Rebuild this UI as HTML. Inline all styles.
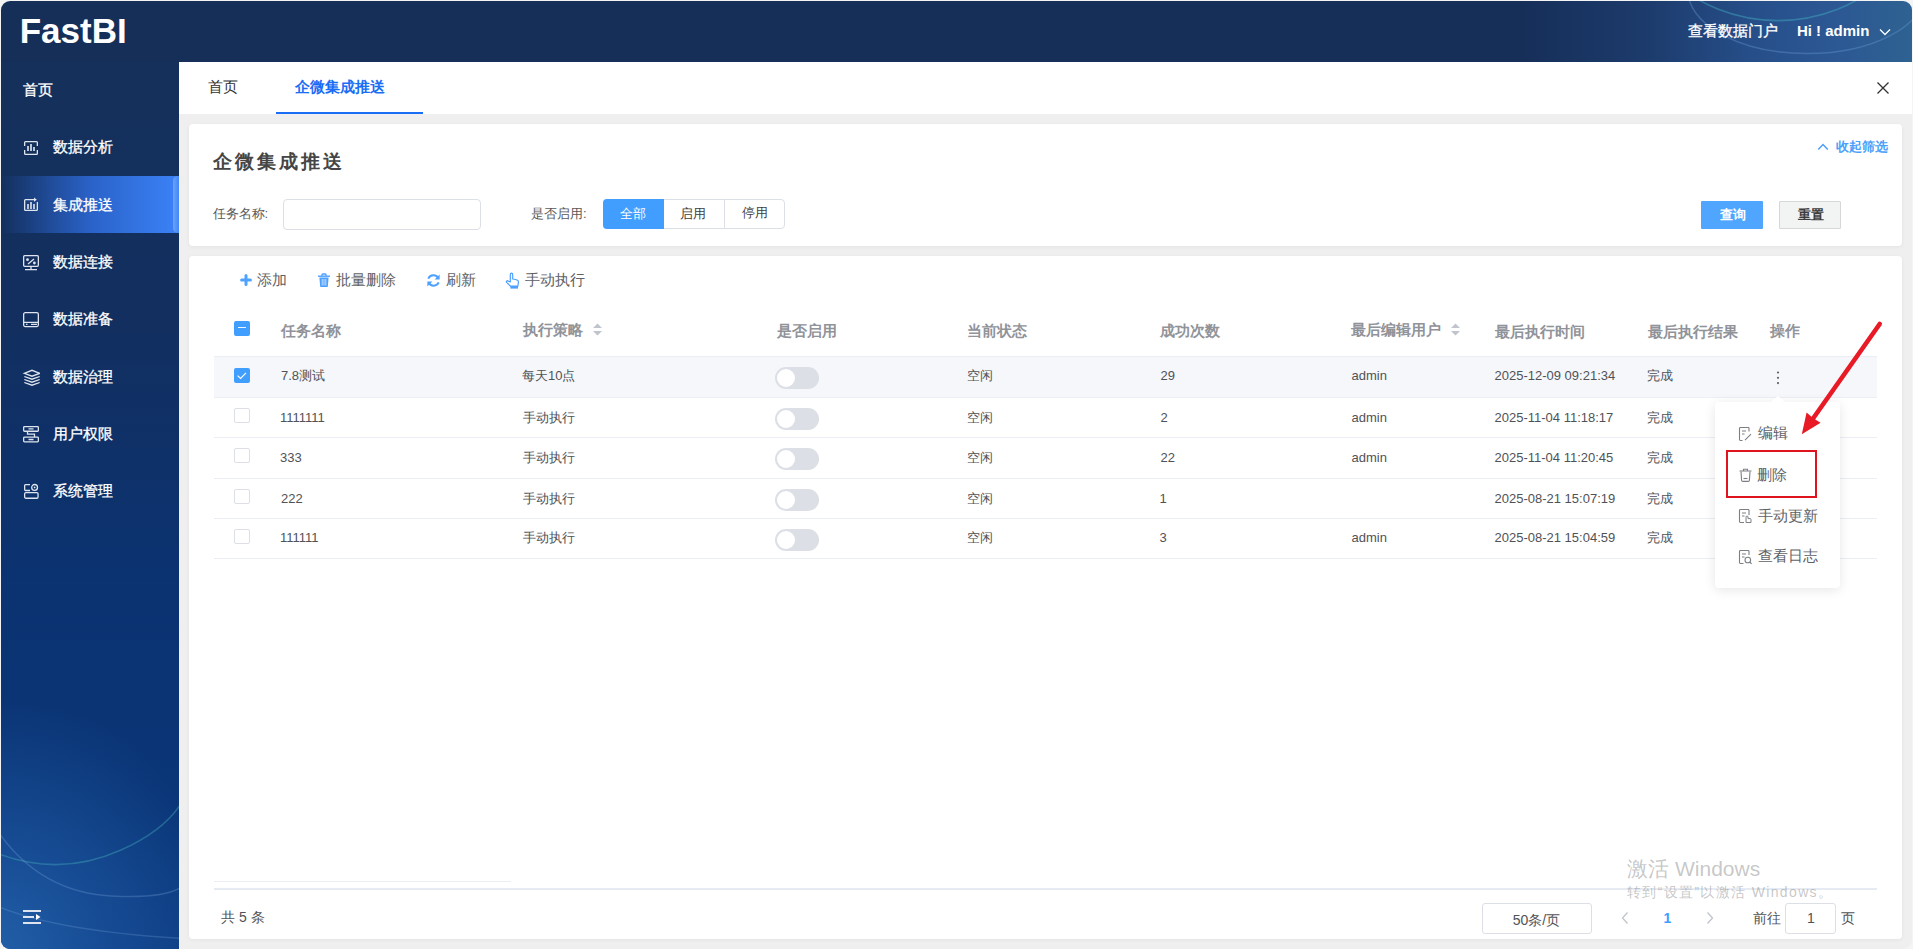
<!DOCTYPE html>
<html><head><meta charset="utf-8">
<style>
*{margin:0;padding:0;box-sizing:border-box}
html,body{width:1913px;height:949px;overflow:hidden;background:#f4f4f4;font-family:"Liberation Sans",sans-serif}
.a{position:absolute;white-space:nowrap}
#frame{position:absolute;left:1px;top:1px;width:1911px;height:948px;border-radius:9px;overflow:hidden;background:#efefef}
#hdr{position:absolute;left:0;top:0;width:1911px;height:61px;background:linear-gradient(90deg,#162f59 0,#162f59 1520px,#1c3a6b 1640px,#27508b 1760px,#2c5893 1840px,#2e6291 1911px);overflow:hidden}
#side{position:absolute;left:0;top:61px;width:178px;height:887px;background:radial-gradient(ellipse 230px 250px at 0% 100%,rgba(33,94,166,1) 0,rgba(28,86,160,.7) 40%,rgba(14,56,125,0) 100%),linear-gradient(180deg,#15305a 0,#122f60 30%,#0b3372 60%,#0a3577 85%,#0c3a80 100%);overflow:hidden}
.menu{position:absolute;left:0;width:178px;height:57px;color:#fff;font-size:15px;font-weight:500}
.menu span{position:absolute;left:52px;top:18px;line-height:20px}
.menu svg{position:absolute}
.ic{fill:none;stroke:#dfe5ee;stroke-width:1.3}
#tabs{position:absolute;left:178px;top:61px;width:1733px;height:52px;background:#fff}
.card{position:absolute;background:#fff;border-radius:4px;box-shadow:0 1px 4px rgba(0,0,0,.05)}
.lbl{color:#606266;font-size:13px;line-height:16px}
.th{color:#909399;font-size:15px;font-weight:bold;line-height:18px}
.td{color:#606266;font-size:13px;line-height:16px}
.cb{position:absolute;left:45px;width:15px;height:15px;border:1px solid #dcdfe6;border-radius:2px;background:#fff}
.sw{position:absolute;left:586px;width:44px;height:21px;border-radius:11px;background:#dcdfe6}
.sw:after{content:"";position:absolute;left:2px;top:2px;width:17px;height:17px;border-radius:50%;background:#fff}
.rl{position:absolute;left:25px;width:1663px;height:1px;background:#ebeef5}
.dd{color:#606266;font-size:15px;line-height:18px}
</style></head><body>
<div id="frame">
  <div id="hdr">
    <svg class="a" style="left:0;top:0" width="1911" height="61">
      <circle cx="1777" cy="-142.4" r="162" fill="none" stroke="rgba(70,180,200,.42)" stroke-width="1.6"/>
      <ellipse cx="1806" cy="-10.4" rx="119" ry="63" fill="none" stroke="rgba(110,160,220,.35)" stroke-width="1.5"/>
    </svg>
                <svg class="a" style="left:1878px;top:27px" width="12" height="8" viewBox="0 0 12 8"><path d="M1 1.5 L6 6.5 L11 1.5" fill="none" stroke="#fff" stroke-width="1.3"/></svg>
  </div>
  <div id="side">
    <svg class="a" style="left:0;top:0" width="178" height="886">
      <path d="M-2 792 Q 60 815 120 788 T 190 718" fill="none" stroke="rgba(70,180,190,.38)" stroke-width="1.6"/>
      <path d="M-2 771 Q 40 830 110 834 T 190 815" fill="none" stroke="rgba(140,180,230,.25)" stroke-width="1.5"/>
      <path d="M-2 845 Q 60 870 190 877" fill="none" stroke="rgba(140,180,230,.22)" stroke-width="1.5"/>
    </svg>
    <div class="menu" style="top:0"></div>
    <div class="menu" style="top:57px"><svg style="left:22px;top:21px" width="16" height="16">
      <path class="ic" d="M1.65 6 V2.5 Q1.65 1.65 2.5 1.65 H13.5 Q14.35 1.65 14.35 2.5 V6 M1.65 10 V13.5 Q1.65 14.35 2.5 14.35 H13.5 Q14.35 14.35 14.35 13.5 V10"/>
      <rect x="4" y="6" width="2" height="5" fill="#b9c4d4"/><rect x="7" y="4" width="2" height="7" fill="#b9c4d4"/><rect x="10" y="7" width="2" height="4" fill="#b9c4d4"/>
    </svg></div>
    <div class="menu" style="top:114px;background:linear-gradient(90deg,rgba(30,80,170,0) 0,#2a62c8 50%,#3b82f8 100%)"><div class="a" style="left:172px;top:0;width:6px;height:57px;background:linear-gradient(90deg,rgba(150,190,255,.55),rgba(120,170,255,.1));border-radius:5px 0 0 5px"></div><svg style="left:22px;top:20px" width="16" height="16">
      <path class="ic" d="M1.65 14 V4.5 Q1.65 3.65 2.5 3.65 H11.5 M14.35 6 V13.5 Q14.35 14.35 13.5 14.35 H2.5 Q1.65 14.35 1.65 13.5"/>
      <path d="M11 1.6 L13.8 3.65 L11 5.7 Z" fill="#dfe5ee"/>
      <rect x="4" y="8" width="2" height="5" fill="#b9c4d4"/><rect x="7" y="6" width="2" height="7" fill="#b9c4d4"/><rect x="10" y="8" width="2" height="5" fill="#b9c4d4"/>
    </svg></div>
    <div class="menu" style="top:171px"><svg style="left:21px;top:21px" width="18" height="17">
      <rect class="ic" x="1.65" y="1.65" width="14.7" height="10.7" rx="1"/>
      <path class="ic" d="M9 12.5 V15.2 M3 15.6 H15 M6 10 L12 5"/>
      <circle cx="5.5" cy="5.7" r="1.4" fill="#dfe5ee"/><circle cx="12.4" cy="9" r="1.4" fill="#dfe5ee"/>
    </svg></div>
    <div class="menu" style="top:228px"><svg style="left:21px;top:21px" width="18" height="17">
      <rect class="ic" x="1.65" y="1.65" width="14.7" height="13.9" rx="1.5"/>
      <path class="ic" d="M1.65 11.3 H16.35 M4 13.4 H5.5 M9 13.4 H15"/>
    </svg></div>
    <div class="menu" style="top:285px"><svg style="left:21px;top:22px" width="18" height="18">
      <path class="ic" d="M2.3 4.3 L10 1.3 L17.7 4.3 L10 7.2 Z M2.3 7.5 L10 10.2 L17.7 7.5 M2.3 10.5 L10 13.2 L17.7 10.5 M2.3 13.5 L10 16.2 L17.7 13.5"/>
    </svg></div>
    <div class="menu" style="top:342px"><svg style="left:21px;top:21px" width="18" height="18">
      <rect class="ic" x="1.65" y="1.65" width="14.7" height="4.6" rx="0.8"/>
      <rect class="ic" x="1.65" y="12.2" width="14.7" height="4.6" rx="0.8"/>
      <path class="ic" d="M6.5 3.9 H11.5 M6.5 14.5 H11.5 M5.5 6.5 V9.2 H12.5 V12"/>
    </svg></div>
    <div class="menu" style="top:399px"><svg style="left:21px;top:21px" width="18" height="18">
      <path class="ic" d="M8 2.65 H3.5 Q2.65 2.65 2.65 3.5 V7.6 Q2.65 8.5 3.5 8.5 H8"/>
      <circle class="ic" cx="12.6" cy="5.4" r="2.9"/><circle cx="12.6" cy="5.4" r="0.9" fill="#dfe5ee"/>
      <rect class="ic" x="2.65" y="10.65" width="13.4" height="5.6" rx="1.2"/>
    </svg></div>
    <svg class="a" style="left:21px;top:847px" width="20" height="16">
      <rect x="1" y="1" width="18" height="2" fill="#dde4f0"/><rect x="1" y="7" width="11" height="2" fill="#dde4f0"/><rect x="1" y="13" width="18" height="2" fill="#dde4f0"/>
      <path d="M14 5 L18.5 8 L14 11 Z" fill="#fff"/>
    </svg>
  </div>
  <div id="tabs">
            <div class="a" style="left:97px;top:50px;width:147px;height:2px;background:#1a6ef5"></div>
    <svg class="a" style="left:1697px;top:19px" width="14" height="14"><path d="M1.5 1.5 L12.5 12.5 M12.5 1.5 L1.5 12.5" stroke="#303133" stroke-width="1.3"/></svg>
  </div>
</div>
<div class="card" style="left:189px;top:124px;width:1713px;height:122px"></div>
<div class="card" style="left:189px;top:256px;width:1713px;height:683px"></div>
<svg class="a" style="left:1817px;top:142px" width="12" height="9"><path d="M1.2 7.5 L6 2.5 L10.8 7.5" fill="none" stroke="#4c9ffa" stroke-width="1.5"/></svg>
<div class="a" style="left:283px;top:199px;width:198px;height:31px;border:1px solid #dcdfe6;border-radius:4px;background:#fff"></div>
<div class="a" style="left:603px;top:199px;width:182px;height:30px;border:1px solid #dcdfe6;border-radius:4px;background:#fff"></div>
<div class="a" style="left:603px;top:199px;width:61px;height:30px;border-radius:4px 0 0 4px;background:#419eff"></div>
<div class="a" style="left:724px;top:200px;width:1px;height:28px;background:#dcdfe6"></div>
<div class="a" style="left:1701px;top:201px;width:62px;height:28px;background:#50a6ff;border-radius:1px"></div>
<div class="a" style="left:1779px;top:201px;width:62px;height:28px;background:#f2f3f3;border:1px solid #d6d7d7;border-radius:1px"></div>
<svg class="a" style="left:239px;top:273px" width="14" height="14"><path d="M7 2.6 V11.4 M2.6 7 H11.4" stroke="#4fa2ff" stroke-width="3" stroke-linecap="round"/></svg>
<svg class="a" style="left:317px;top:273px" width="14" height="15">
<path d="M1 3.2 H13" stroke="#4ca0ff" stroke-width="1.4"/><path d="M5 3 V1.8 Q5 1 5.8 1 H8.2 Q9 1 9 1.8 V3" fill="none" stroke="#4ca0ff" stroke-width="1.3"/>
<path d="M2.4 4.5 H11.6 L10.8 13.4 Q10.7 14 10 14 H4 Q3.3 14 3.2 13.4 Z" fill="#4ca0ff"/>
<path d="M5.2 6 V12.5 M7 6 V12.5 M8.8 6 V12.5" stroke="#cfe3ff" stroke-width="0.9"/></svg>
<svg class="a" style="left:426px;top:273px" width="15" height="15">
<path d="M12.3 5.2 A5.6 5.6 0 0 0 2.3 5.6" fill="none" stroke="#4ca0ff" stroke-width="2"/><path d="M13.6 1.5 V6.6 H8.6 Z" fill="#4ca0ff"/>
<path d="M2.7 9.8 A5.6 5.6 0 0 0 12.7 9.4" fill="none" stroke="#4ca0ff" stroke-width="2"/><path d="M1.4 13.5 V8.4 H6.4 Z" fill="#4ca0ff"/></svg>
<svg class="a" style="left:505px;top:272px" width="15" height="17">
<path d="M5.3 10 V2.6 Q5.3 1.2 6.5 1.2 Q7.7 1.2 7.7 2.6 V7 Q10.8 7.3 12.6 8.3 Q13.6 9 13.4 10.6 L12.8 14.2 H5.6 L1.6 10.4 Q1 9.6 1.8 9 Q2.6 8.4 3.5 9.2 Z" fill="none" stroke="#4ca0ff" stroke-width="1.2" stroke-linejoin="round"/>
<rect x="5.4" y="14" width="7.6" height="2.6" fill="#4ca0ff"/></svg>
<div class="a" style="left:214px;top:356px;width:1663px;height:1px;background:#ebeef5"></div>
<div class="a" style="left:214px;top:357px;width:1663px;height:40px;background:#f5f7fa"></div>
<div class="a" style="left:214px;top:397px;width:1663px;height:1px;background:#ebeef5"></div>
<div class="a" style="left:214px;top:437px;width:1663px;height:1px;background:#ebeef5"></div>
<div class="a" style="left:214px;top:478px;width:1663px;height:1px;background:#ebeef5"></div>
<div class="a" style="left:214px;top:518px;width:1663px;height:1px;background:#ebeef5"></div>
<div class="a" style="left:214px;top:558px;width:1663px;height:1px;background:#ebeef5"></div>
<div class="a" style="left:234px;top:321px;width:16px;height:15px;border-radius:2px;background:#409eff"><div class="a" style="left:4px;top:6px;width:8px;height:1px;background:rgba(255,255,255,.9)"></div></div>
<div class="a" style="left:234px;top:368px;width:16px;height:15px;border-radius:2px;background:#409eff"><svg class="a" style="left:0;top:0" width="16" height="15"><path d="M3.6 7.6 L6.6 10.4 L12 4.8" fill="none" stroke="#fff" stroke-width="1.2"/></svg></div>
<div class="a" style="left:234px;top:408px;width:16px;height:15px;border:1px solid #dcdfe6;border-radius:2px;background:#fff"></div>
<div class="a" style="left:234px;top:448px;width:16px;height:15px;border:1px solid #dcdfe6;border-radius:2px;background:#fff"></div>
<div class="a" style="left:234px;top:489px;width:16px;height:15px;border:1px solid #dcdfe6;border-radius:2px;background:#fff"></div>
<div class="a" style="left:234px;top:529px;width:16px;height:15px;border:1px solid #dcdfe6;border-radius:2px;background:#fff"></div>
<svg class="a" style="left:592px;top:322px" width="11" height="15"><path d="M1 6 L5.5 1.5 L10 6 Z M1 9 L5.5 13.5 L10 9 Z" fill="#c0c4cc"/></svg>
<svg class="a" style="left:1450px;top:322px" width="11" height="15"><path d="M1 6 L5.5 1.5 L10 6 Z M1 9 L5.5 13.5 L10 9 Z" fill="#c0c4cc"/></svg>
<div class="a" style="left:775px;top:367px;width:44px;height:22px;border-radius:11px;background:#dcdfe6"><div class="a" style="left:2px;top:2px;width:18px;height:18px;border-radius:50%;background:#fff"></div></div>
<div class="a" style="left:775px;top:408px;width:44px;height:22px;border-radius:11px;background:#dcdfe6"><div class="a" style="left:2px;top:2px;width:18px;height:18px;border-radius:50%;background:#fff"></div></div>
<div class="a" style="left:775px;top:448px;width:44px;height:22px;border-radius:11px;background:#dcdfe6"><div class="a" style="left:2px;top:2px;width:18px;height:18px;border-radius:50%;background:#fff"></div></div>
<div class="a" style="left:775px;top:489px;width:44px;height:22px;border-radius:11px;background:#dcdfe6"><div class="a" style="left:2px;top:2px;width:18px;height:18px;border-radius:50%;background:#fff"></div></div>
<div class="a" style="left:775px;top:529px;width:44px;height:22px;border-radius:11px;background:#dcdfe6"><div class="a" style="left:2px;top:2px;width:18px;height:18px;border-radius:50%;background:#fff"></div></div>
<svg class="a" style="left:1775px;top:370px" width="6" height="16"><circle cx="3" cy="2.5" r="1.1" fill="#606266"/><circle cx="3" cy="7.8" r="1.1" fill="#606266"/><circle cx="3" cy="13.1" r="1.1" fill="#606266"/></svg>
<div class="a" style="left:214px;top:881px;width:297px;height:1px;background:#ebeef5"></div>
<div class="a" style="left:214px;top:888px;width:1663px;height:2px;background:#e6eaf2"></div>
<div class="a" style="left:1482px;top:903px;width:110px;height:31px;border:1px solid #dcdfe6;border-radius:3px;background:#fff"></div>
<svg class="a" style="left:1620px;top:911px" width="10" height="14"><path d="M7.5 1.5 L2.5 7 L7.5 12.5" fill="none" stroke="#c0c4cc" stroke-width="1.3"/></svg>
<svg class="a" style="left:1705px;top:911px" width="10" height="14"><path d="M2.5 1.5 L7.5 7 L2.5 12.5" fill="none" stroke="#c0c4cc" stroke-width="1.3"/></svg>
<div class="a" style="left:1785px;top:903px;width:51px;height:31px;border:1px solid #dcdfe6;border-radius:3px;background:#fff"></div>
<div class="a" style="left:1715px;top:402px;width:125px;height:186px;background:#fff;border-radius:4px;box-shadow:0 2px 12px rgba(0,0,0,.1)"></div>
<svg class="a" style="left:1769px;top:395px" width="18" height="8"><path d="M1 8 L9 1 L17 8 Z" fill="#fff"/></svg>
<svg class="a" style="left:1738px;top:426px" width="15" height="16"><path d="M11 5.5 V2.4 Q11 1.5 10.1 1.5 H2.4 Q1.5 1.5 1.5 2.4 V13.6 Q1.5 14.5 2.4 14.5 H4.5" fill="none" stroke="#7d7f84" stroke-width="1.1"/>
<path d="M4 5 H8 M4 8 H6.5 M7 14.2 L13 8.2" stroke="#7d7f84" stroke-width="1.1" fill="none"/></svg>
<svg class="a" style="left:1738px;top:467px" width="15" height="16"><path d="M1.5 4 H13.5 M5.5 3.8 V2.2 H9.5 V3.8" fill="none" stroke="#7d7f84" stroke-width="1.1"/>
<path d="M3 4.5 L3.6 13.4 Q3.7 14.4 4.7 14.4 H10.3 Q11.3 14.4 11.4 13.4 L12 4.5" fill="none" stroke="#7d7f84" stroke-width="1.1"/><path d="M5.5 11.5 H9.5" stroke="#7d7f84" stroke-width="1.1"/></svg>
<svg class="a" style="left:1738px;top:508px" width="15" height="16"><path d="M11 7 V2.4 Q11 1.5 10.1 1.5 H2.4 Q1.5 1.5 1.5 2.4 V13.6 Q1.5 14.5 2.4 14.5 H6" fill="none" stroke="#7d7f84" stroke-width="1.1"/>
<path d="M4 5 H8 M4 8 H6.5" stroke="#7d7f84" stroke-width="1.1"/><path d="M8 9 V14.5 H13 V11.5 Q13 10.6 12 10.6 H10 V9 Q10 8 9 8 Q8 8 8 9Z" fill="none" stroke="#7d7f84" stroke-width="1"/></svg>
<svg class="a" style="left:1738px;top:549px" width="15" height="16"><path d="M11 6 V2.4 Q11 1.5 10.1 1.5 H2.4 Q1.5 1.5 1.5 2.4 V13.6 Q1.5 14.5 2.4 14.5 H5.5" fill="none" stroke="#7d7f84" stroke-width="1.1"/>
<path d="M4 5 H8 M4 8 H6.5" stroke="#7d7f84" stroke-width="1.1"/><circle cx="9.8" cy="11" r="2.8" fill="none" stroke="#7d7f84" stroke-width="1.1"/><path d="M11.8 13 L13.6 14.8" stroke="#7d7f84" stroke-width="1.1"/></svg>
<div class="a" style="left:1726px;top:450px;width:91px;height:48px;border:2px solid #e0141e"></div>
<svg class="a" style="left:1780px;top:300px" width="120" height="150"><path d="M99.7 24 L32 120" stroke="#e81a25" stroke-width="4.6" stroke-linecap="round"/>
<path d="M21.8 134.2 L26.6 112.6 L33.2 118.3 L40.6 122.8 Z" fill="#e81a25"/></svg>
<div id="logo" class="a" style="left:19.70px;top:9.55px;font-size:35px;line-height:41px;font-weight:bold;color:#fff;">FastBI</div>
<div id="portal" class="a" style="left:1687.50px;top:19.60px;font-size:15px;line-height:21px;font-weight:normal;color:#fff;-webkit-text-stroke:0.3px #fff">查看数据门户</div>
<div id="hi" class="a" style="left:1796.90px;top:20.15px;font-size:15px;line-height:21px;font-weight:bold;color:#fff;">Hi ! admin</div>
<div id="s0" class="a" style="left:23.30px;top:78.65px;font-size:15px;line-height:21px;font-weight:normal;color:#fff;-webkit-text-stroke:0.3px #fff">首页</div>
<div id="s1" class="a" style="left:53.30px;top:135.75px;font-size:15px;line-height:21px;font-weight:normal;color:#fff;-webkit-text-stroke:0.3px #fff">数据分析</div>
<div id="s2" class="a" style="left:53.30px;top:193.55px;font-size:15px;line-height:21px;font-weight:normal;color:#fff;-webkit-text-stroke:0.3px #fff">集成推送</div>
<div id="s3" class="a" style="left:53.30px;top:250.80px;font-size:15px;line-height:21px;font-weight:normal;color:#fff;-webkit-text-stroke:0.3px #fff">数据连接</div>
<div id="s4" class="a" style="left:53.30px;top:308.00px;font-size:15px;line-height:21px;font-weight:normal;color:#fff;-webkit-text-stroke:0.3px #fff">数据准备</div>
<div id="s5" class="a" style="left:53.30px;top:365.70px;font-size:15px;line-height:21px;font-weight:normal;color:#fff;-webkit-text-stroke:0.3px #fff">数据治理</div>
<div id="s6" class="a" style="left:53.30px;top:423.20px;font-size:15px;line-height:21px;font-weight:normal;color:#fff;-webkit-text-stroke:0.3px #fff">用户权限</div>
<div id="s7" class="a" style="left:53.30px;top:479.90px;font-size:15px;line-height:21px;font-weight:normal;color:#fff;-webkit-text-stroke:0.3px #fff">系统管理</div>
<div id="tab0" class="a" style="left:208.00px;top:76.20px;font-size:15px;line-height:21px;font-weight:normal;color:#303133;">首页</div>
<div id="tab1" class="a" style="left:294.50px;top:76.20px;font-size:15px;line-height:21px;font-weight:bold;color:#1a6ef5;">企微集成推送</div>
<div id="title" class="a" style="left:212.60px;top:149.15px;font-size:19px;line-height:25px;font-weight:bold;color:#454545;letter-spacing:3px">企微集成推送</div>
<div id="collapse" class="a" style="left:1835.90px;top:137.10px;font-size:13px;line-height:19px;font-weight:bold;color:#4c9ffa;">收起筛选</div>
<div id="lbl1" class="a" style="left:212.60px;top:203.50px;font-size:13px;line-height:19px;font-weight:normal;color:#595959;">任务名称:</div>
<div id="lbl2" class="a" style="left:531.10px;top:203.90px;font-size:13px;line-height:19px;font-weight:normal;color:#595959;">是否启用:</div>
<div id="seg0" class="a" style="left:620.00px;top:203.95px;font-size:13px;line-height:19px;font-weight:normal;color:#fff;">全部</div>
<div id="seg1" class="a" style="left:680.00px;top:203.95px;font-size:13px;line-height:19px;font-weight:normal;color:#404040;">启用</div>
<div id="seg2" class="a" style="left:742.10px;top:202.95px;font-size:13px;line-height:19px;font-weight:normal;color:#404040;">停用</div>
<div id="q" class="a" style="left:1720.00px;top:205.10px;font-size:13px;line-height:19px;font-weight:bold;color:#fff;">查询</div>
<div id="r" class="a" style="left:1797.60px;top:205.10px;font-size:13px;line-height:19px;font-weight:bold;color:#3d3d3d;">重置</div>
<div id="tb0" class="a" style="left:256.90px;top:269.10px;font-size:15px;line-height:21px;font-weight:normal;color:#606266;">添加</div>
<div id="tb1" class="a" style="left:336.00px;top:269.10px;font-size:15px;line-height:21px;font-weight:normal;color:#606266;">批量删除</div>
<div id="tb2" class="a" style="left:445.70px;top:268.95px;font-size:15px;line-height:21px;font-weight:normal;color:#606266;">刷新</div>
<div id="tb3" class="a" style="left:524.70px;top:268.95px;font-size:15px;line-height:21px;font-weight:normal;color:#606266;">手动执行</div>
<div id="h0" class="a" style="left:281.30px;top:320.25px;font-size:15px;line-height:21px;font-weight:bold;color:#909399;">任务名称</div>
<div id="h1" class="a" style="left:523.00px;top:319.00px;font-size:15px;line-height:21px;font-weight:bold;color:#909399;">执行策略</div>
<div id="h2" class="a" style="left:776.50px;top:320.30px;font-size:15px;line-height:21px;font-weight:bold;color:#909399;">是否启用</div>
<div id="h3" class="a" style="left:967.20px;top:320.20px;font-size:15px;line-height:21px;font-weight:bold;color:#909399;">当前状态</div>
<div id="h4" class="a" style="left:1160.10px;top:320.20px;font-size:15px;line-height:21px;font-weight:bold;color:#909399;">成功次数</div>
<div id="h5" class="a" style="left:1351.00px;top:318.90px;font-size:15px;line-height:21px;font-weight:bold;color:#909399;">最后编辑用户</div>
<div id="h6" class="a" style="left:1494.60px;top:321.45px;font-size:15px;line-height:21px;font-weight:bold;color:#909399;">最后执行时间</div>
<div id="h7" class="a" style="left:1648.00px;top:321.45px;font-size:15px;line-height:21px;font-weight:bold;color:#909399;">最后执行结果</div>
<div id="h8" class="a" style="left:1769.60px;top:320.45px;font-size:15px;line-height:21px;font-weight:bold;color:#909399;">操作</div>
<div id="r0a" class="a" style="left:281.00px;top:366.30px;font-size:13px;line-height:19px;font-weight:normal;color:#505257;font-family:"Liberation Sans",sans-serif">7.8测试</div>
<div id="r0b" class="a" style="left:522.00px;top:366.30px;font-size:13px;line-height:19px;font-weight:normal;color:#505257;">每天10点</div>
<div id="r0c" class="a" style="left:967.20px;top:366.30px;font-size:13px;line-height:19px;font-weight:normal;color:#505257;">空闲</div>
<div id="r0d" class="a" style="left:1160.50px;top:366.30px;font-size:13px;line-height:19px;font-weight:normal;color:#505257;">29</div>
<div id="r0e" class="a" style="left:1351.50px;top:366.30px;font-size:13px;line-height:19px;font-weight:normal;color:#505257;">admin</div>
<div id="r0f" class="a" style="left:1494.50px;top:366.30px;font-size:13px;line-height:19px;font-weight:normal;color:#505257;">2025-12-09 09:21:34</div>
<div id="r0g" class="a" style="left:1647.00px;top:366.30px;font-size:13px;line-height:19px;font-weight:normal;color:#505257;">完成</div>
<div id="r1a" class="a" style="left:280.00px;top:408.10px;font-size:13px;line-height:19px;font-weight:normal;color:#505257;font-family:"Liberation Sans",sans-serif">1111111</div>
<div id="r1b" class="a" style="left:523.00px;top:408.10px;font-size:13px;line-height:19px;font-weight:normal;color:#505257;">手动执行</div>
<div id="r1c" class="a" style="left:967.20px;top:408.10px;font-size:13px;line-height:19px;font-weight:normal;color:#505257;">空闲</div>
<div id="r1d" class="a" style="left:1160.50px;top:408.10px;font-size:13px;line-height:19px;font-weight:normal;color:#505257;">2</div>
<div id="r1e" class="a" style="left:1351.50px;top:408.10px;font-size:13px;line-height:19px;font-weight:normal;color:#505257;">admin</div>
<div id="r1f" class="a" style="left:1494.50px;top:408.10px;font-size:13px;line-height:19px;font-weight:normal;color:#505257;">2025-11-04 11:18:17</div>
<div id="r1g" class="a" style="left:1647.00px;top:408.10px;font-size:13px;line-height:19px;font-weight:normal;color:#505257;">完成</div>
<div id="r2a" class="a" style="left:280.00px;top:447.90px;font-size:13px;line-height:19px;font-weight:normal;color:#505257;font-family:"Liberation Sans",sans-serif">333</div>
<div id="r2b" class="a" style="left:523.00px;top:447.90px;font-size:13px;line-height:19px;font-weight:normal;color:#505257;">手动执行</div>
<div id="r2c" class="a" style="left:967.20px;top:447.90px;font-size:13px;line-height:19px;font-weight:normal;color:#505257;">空闲</div>
<div id="r2d" class="a" style="left:1160.50px;top:447.90px;font-size:13px;line-height:19px;font-weight:normal;color:#505257;">22</div>
<div id="r2e" class="a" style="left:1351.50px;top:447.90px;font-size:13px;line-height:19px;font-weight:normal;color:#505257;">admin</div>
<div id="r2f" class="a" style="left:1494.50px;top:447.90px;font-size:13px;line-height:19px;font-weight:normal;color:#505257;">2025-11-04 11:20:45</div>
<div id="r2g" class="a" style="left:1647.00px;top:447.90px;font-size:13px;line-height:19px;font-weight:normal;color:#505257;">完成</div>
<div id="r3a" class="a" style="left:281.00px;top:489.00px;font-size:13px;line-height:19px;font-weight:normal;color:#505257;font-family:"Liberation Sans",sans-serif">222</div>
<div id="r3b" class="a" style="left:523.00px;top:489.00px;font-size:13px;line-height:19px;font-weight:normal;color:#505257;">手动执行</div>
<div id="r3c" class="a" style="left:967.20px;top:489.00px;font-size:13px;line-height:19px;font-weight:normal;color:#505257;">空闲</div>
<div id="r3d" class="a" style="left:1159.50px;top:489.00px;font-size:13px;line-height:19px;font-weight:normal;color:#505257;">1</div>
<div id="r3f" class="a" style="left:1494.50px;top:489.00px;font-size:13px;line-height:19px;font-weight:normal;color:#505257;">2025-08-21 15:07:19</div>
<div id="r3g" class="a" style="left:1647.00px;top:489.00px;font-size:13px;line-height:19px;font-weight:normal;color:#505257;">完成</div>
<div id="r4a" class="a" style="left:280.00px;top:528.20px;font-size:13px;line-height:19px;font-weight:normal;color:#505257;font-family:"Liberation Sans",sans-serif">111111</div>
<div id="r4b" class="a" style="left:523.00px;top:528.20px;font-size:13px;line-height:19px;font-weight:normal;color:#505257;">手动执行</div>
<div id="r4c" class="a" style="left:967.20px;top:528.20px;font-size:13px;line-height:19px;font-weight:normal;color:#505257;">空闲</div>
<div id="r4d" class="a" style="left:1159.50px;top:528.20px;font-size:13px;line-height:19px;font-weight:normal;color:#505257;">3</div>
<div id="r4e" class="a" style="left:1351.50px;top:528.20px;font-size:13px;line-height:19px;font-weight:normal;color:#505257;">admin</div>
<div id="r4f" class="a" style="left:1494.50px;top:528.20px;font-size:13px;line-height:19px;font-weight:normal;color:#505257;">2025-08-21 15:04:59</div>
<div id="r4g" class="a" style="left:1647.00px;top:528.20px;font-size:13px;line-height:19px;font-weight:normal;color:#505257;">完成</div>
<div id="dd0" class="a" style="left:1757.80px;top:422.10px;font-size:15px;line-height:21px;font-weight:normal;color:#606266;">编辑</div>
<div id="dd1" class="a" style="left:1756.80px;top:463.55px;font-size:15px;line-height:21px;font-weight:normal;color:#606266;">删除</div>
<div id="dd2" class="a" style="left:1757.80px;top:504.55px;font-size:15px;line-height:21px;font-weight:normal;color:#606266;">手动更新</div>
<div id="dd3" class="a" style="left:1757.80px;top:545.15px;font-size:15px;line-height:21px;font-weight:normal;color:#606266;">查看日志</div>
<div id="total" class="a" style="left:221.10px;top:907.35px;font-size:14px;line-height:20px;font-weight:normal;color:#505257;">共 5 条</div>
<div id="psz" class="a" style="left:1512.70px;top:909.90px;font-size:14px;line-height:20px;font-weight:normal;color:#505257;">50条/页</div>
<div id="pg1" class="a" style="left:1663.50px;top:908.00px;font-size:14px;line-height:20px;font-weight:bold;color:#409eff;">1</div>
<div id="goto" class="a" style="left:1752.90px;top:907.75px;font-size:14px;line-height:20px;font-weight:normal;color:#505257;">前往</div>
<div id="pin" class="a" style="left:1807.10px;top:908.00px;font-size:14px;line-height:20px;font-weight:normal;color:#505257;">1</div>
<div id="pye" class="a" style="left:1841.30px;top:907.75px;font-size:14px;line-height:20px;font-weight:normal;color:#505257;">页</div>
<div id="wm1" class="a" style="left:1627.20px;top:855.35px;font-size:21px;line-height:27px;font-weight:normal;color:rgba(120,120,120,.42);">激活 Windows</div>
<div id="wm2" class="a" style="left:1627.00px;top:882.05px;font-size:14px;line-height:20px;font-weight:normal;color:rgba(120,120,120,.42);letter-spacing:1.35px">转到“设置”以激活 Windows。</div>
</body></html>
